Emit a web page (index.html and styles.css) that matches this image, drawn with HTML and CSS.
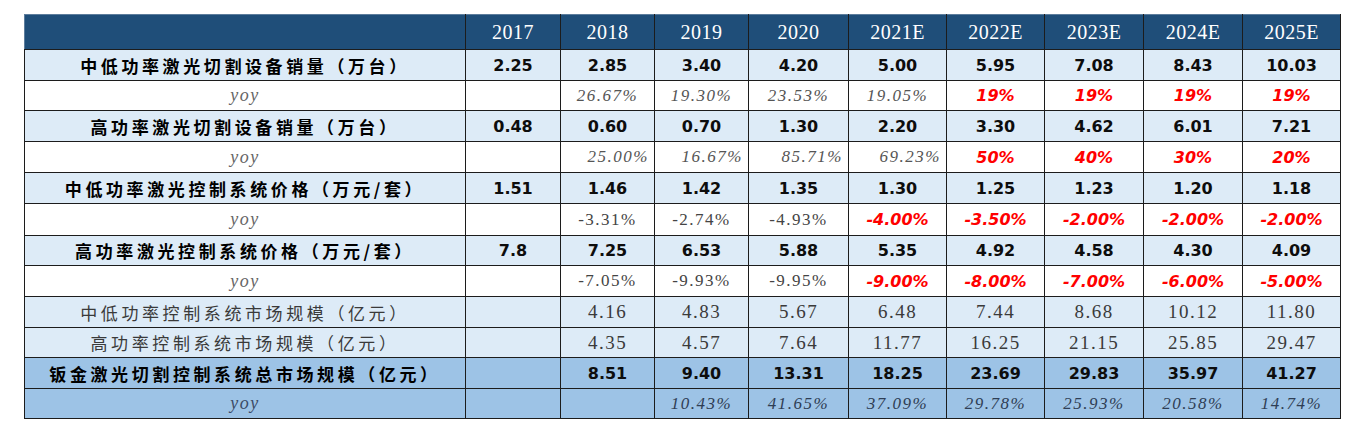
FILE: index.html
```html
<!DOCTYPE html>
<html lang="zh-CN">
<head>
<meta charset="utf-8">
<title>钣金激光切割控制系统市场规模</title>
<link rel="stylesheet" href="styles.css">
</head>
<body>
<table class="grid">
  <colgroup>
    <col class="c-lab">
    <col class="w95"><col class="w94"><col class="w94"><col class="w100">
    <col class="w98"><col class="w98"><col class="w99"><col class="w99"><col class="w98">
  </colgroup>
  <thead>
    <tr class="head">
      <th></th><th>2017</th><th>2018</th><th>2019</th><th>2020</th><th>2021E</th><th>2022E</th><th>2023E</th><th>2024E</th><th>2025E</th>
    </tr>
  </thead>
  <tbody>
    <tr class="hl h31">
      <td class="lab bold">中低功率激光切割设备销量（万台）</td>
      <td class="bnum">2.25</td><td class="bnum">2.85</td><td class="bnum">3.40</td><td class="bnum">4.20</td><td class="bnum">5.00</td><td class="bnum">5.95</td><td class="bnum">7.08</td><td class="bnum">8.43</td><td class="bnum">10.03</td>
    </tr>
    <tr class="wh h30">
      <td class="lab yoy">yoy</td>
      <td></td><td class="ipct">26.67%</td><td class="ipct">19.30%</td><td class="ipct">23.53%</td><td class="ipct">19.05%</td><td class="red">19%</td><td class="red">19%</td><td class="red">19%</td><td class="red">19%</td>
    </tr>
    <tr class="hl h31">
      <td class="lab bold">高功率激光切割设备销量（万台）</td>
      <td class="bnum">0.48</td><td class="bnum">0.60</td><td class="bnum">0.70</td><td class="bnum">1.30</td><td class="bnum">2.20</td><td class="bnum">3.30</td><td class="bnum">4.62</td><td class="bnum">6.01</td><td class="bnum">7.21</td>
    </tr>
    <tr class="wh h31">
      <td class="lab yoy">yoy</td>
      <td></td><td class="ipct rt">25.00%</td><td class="ipct rt">16.67%</td><td class="ipct rt">85.71%</td><td class="ipct rt">69.23%</td><td class="red">50%</td><td class="red">40%</td><td class="red">30%</td><td class="red">20%</td>
    </tr>
    <tr class="hl h31">
      <td class="lab bold">中低功率激光控制系统价格（万元/套）</td>
      <td class="bnum">1.51</td><td class="bnum">1.46</td><td class="bnum">1.42</td><td class="bnum">1.35</td><td class="bnum">1.30</td><td class="bnum">1.25</td><td class="bnum">1.23</td><td class="bnum">1.20</td><td class="bnum">1.18</td>
    </tr>
    <tr class="wh h32">
      <td class="lab yoy">yoy</td>
      <td></td><td class="rpct">-3.31%</td><td class="rpct">-2.74%</td><td class="rpct">-4.93%</td><td class="red">-4.00%</td><td class="red">-3.50%</td><td class="red">-2.00%</td><td class="red">-2.00%</td><td class="red">-2.00%</td>
    </tr>
    <tr class="hl h30">
      <td class="lab bold">高功率激光控制系统价格（万元/套）</td>
      <td class="bnum">7.8</td><td class="bnum">7.25</td><td class="bnum">6.53</td><td class="bnum">5.88</td><td class="bnum">5.35</td><td class="bnum">4.92</td><td class="bnum">4.58</td><td class="bnum">4.30</td><td class="bnum">4.09</td>
    </tr>
    <tr class="wh h31">
      <td class="lab yoy">yoy</td>
      <td></td><td class="rpct">-7.05%</td><td class="rpct">-9.93%</td><td class="rpct">-9.95%</td><td class="red">-9.00%</td><td class="red">-8.00%</td><td class="red">-7.00%</td><td class="red">-6.00%</td><td class="red">-5.00%</td>
    </tr>
    <tr class="hl h31">
      <td class="lab reg">中低功率控制系统市场规模（亿元）</td>
      <td></td><td class="rnum">4.16</td><td class="rnum">4.83</td><td class="rnum">5.67</td><td class="rnum">6.48</td><td class="rnum">7.44</td><td class="rnum">8.68</td><td class="rnum">10.12</td><td class="rnum">11.80</td>
    </tr>
    <tr class="hl h30">
      <td class="lab reg">高功率控制系统市场规模（亿元）</td>
      <td></td><td class="rnum">4.35</td><td class="rnum">4.57</td><td class="rnum">7.64</td><td class="rnum">11.77</td><td class="rnum">16.25</td><td class="rnum">21.15</td><td class="rnum">25.85</td><td class="rnum">29.47</td>
    </tr>
    <tr class="mid h31">
      <td class="lab bold">钣金激光切割控制系统总市场规模（亿元）</td>
      <td></td><td class="bnum">8.51</td><td class="bnum">9.40</td><td class="bnum">13.31</td><td class="bnum">18.25</td><td class="bnum">23.69</td><td class="bnum">29.83</td><td class="bnum">35.97</td><td class="bnum">41.27</td>
    </tr>
    <tr class="mid h30">
      <td class="lab yoy">yoy</td>
      <td></td><td></td><td class="ipct dk">10.43%</td><td class="ipct dk">41.65%</td><td class="ipct dk">37.09%</td><td class="ipct dk">29.78%</td><td class="ipct dk">25.93%</td><td class="ipct dk">20.58%</td><td class="ipct dk">14.74%</td>
    </tr>
  </tbody>
</table>
</body>
</html>
```
FILE: styles.css
```css
html, body {
  margin: 0;
  padding: 0;
  background: #ffffff;
}

body {
  padding: 14px 0 0 24px;
  font-family: "Liberation Serif", "Noto Sans CJK SC", serif;
}

.grid {
  border-collapse: collapse;
  table-layout: fixed;
  width: 1317px;
}

.c-lab { width: 441px; }
.w94 { width: 94px; }
.w95 { width: 95px; }
.w98 { width: 98px; }
.w99 { width: 99px; }
.w100 { width: 100px; }

.grid th,
.grid td {
  border: 1px solid #1c1c1c;
  padding: 0;
  text-align: center;
  vertical-align: middle;
  white-space: nowrap;
  overflow: hidden;
}

.head {
  height: 35px;
  background: #1f4e79;
}

.head th {
  color: #ffffff;
  font-family: "Liberation Serif", serif;
  font-weight: normal;
  font-size: 20px;
  letter-spacing: 0.5px;
  border-top-color: #5d7d9c;
}

.head th:first-child {
  border-left-color: #5d7d9c;
}

.h30 { height: 30px; }
.h31 { height: 31px; }
.h32 { height: 32px; }

.hl { background: #ddebf7; }
.wh { background: #ffffff; }
.mid { background: #9dc3e6; }

.lab {
  font-family: "Noto Sans CJK SC", sans-serif;
  font-size: 17px;
  letter-spacing: 3.6px;
  padding-left: 4px;
}

.lab.bold {
  font-weight: 700;
  color: #000000;
}

.lab.reg {
  font-weight: 400;
  color: #3a3a3a;
}

.lab.yoy {
  font-family: "Liberation Serif", serif;
  font-style: italic;
  font-size: 18px;
  letter-spacing: 1.5px;
  color: #666666;
  padding-left: 0;
}

.mid .lab.yoy {
  color: #3c4c66;
}

.bnum {
  font-family: "DejaVu Sans", sans-serif;
  font-weight: 700;
  font-size: 16px;
  color: #0d0d0d;
}

.ipct {
  font-family: "Liberation Serif", serif;
  font-style: italic;
  font-size: 17px;
  letter-spacing: 1.5px;
  color: #555555;
}

.ipct.rt {
  text-align: right;
  padding-right: 5px;
}

.ipct.dk {
  color: #2f3e55;
}

.rpct {
  font-family: "Liberation Serif", serif;
  font-size: 17px;
  letter-spacing: 1.5px;
  color: #444444;
}

.rnum {
  font-family: "Liberation Serif", serif;
  font-size: 19px;
  letter-spacing: 1.5px;
  color: #3a3a3a;
}

.red {
  font-family: "DejaVu Sans", sans-serif;
  font-weight: 700;
  font-style: italic;
  font-size: 16px;
  color: #ff0000;
}
```
